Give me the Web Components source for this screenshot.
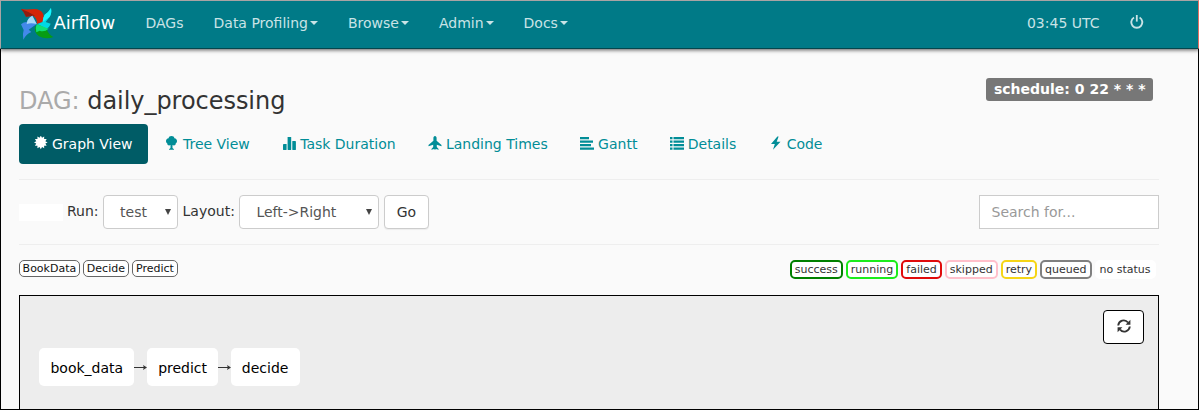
<!DOCTYPE html>
<html lang="en">
<head>
<meta charset="utf-8">
<title>Airflow - DAG daily_processing</title>
<style>
html,body{margin:0;height:100%;overflow:hidden}
body{font:14px/20px "DejaVu Sans",Verdana,sans-serif;color:#333;background:#fafafa}
</style>
</head>
<body>
<dag-page></dag-page>
<script>
const define = (name, markup) => customElements.define(name, class extends HTMLElement {
  constructor() {
    super();
    const html = typeof markup === 'function' ? markup(this) : markup;
    this.attachShadow({mode: 'open'}).innerHTML = html;
  }
});

const burstPoints = Array.from({length: 24}, (_, i) => {
  const r = i % 2 ? 4.7 : 6.8, a = i * Math.PI / 12;
  return `${(6.8 + r * Math.sin(a)).toFixed(2)},${(6.4 - r * Math.cos(a)).toFixed(2)}`;
}).join(' ');

const icons = {
  off: '<path d="M4 2.500A5.500 5.500 0 1 0 9.600 2.500" fill="none" stroke="currentColor" stroke-width="1.900"/><path d="M5.900 0h1.800v6.600H5.900z"/>',
  burst: `<polygon points="${burstPoints}"/>`,
  tree: '<path d="M6.500 0c1.700 0 2.700.9 2.900 2.200 1.600.2 2.600 1.400 2.600 2.900 0 1.100-.5 1.900-1.300 2.400.2 1.700-1.800 2.600-3.200 1.500V12L9 13.200v.5H4v-.5L5.500 12V9C4.100 10.100 2.100 9.200 2.300 7.500 1.500 7 1 6.200 1 5.100c0-1.500 1-2.700 2.600-2.900C3.800.9 4.800 0 6.500 0z"/>',
  stats: '<rect x="1" y="8" width="3.600" height="6" rx=".4"/><rect x="5.600" y="1" width="3.600" height="13" rx=".4"/><rect x="10.300" y="5" width="3.600" height="9" rx=".4"/>',
  plane: '<path d="M7 0c1 0 1.600 1 1.600 2.200v2.600l4.900 4.200v1.300L8.800 8.700v2.400L10.600 13v.8L7.800 13 7 14l-.8-1-2.800.8V13l1.800-1.900V8.700L.5 10.300V9l4.900-4.200V2.200C5.400 1 6 0 7 0z"/>',
  left: '<path d="M0 1h9v2.200H0zM0 4.500h13v2.200H0zM0 8h11v2.200H0zM0 11.500h14v2.200H0z"/>',
  list: '<path d="M0 1h2.500v2.200H0zM3.500 1H14v2.200H3.500zM0 4.500h2.500v2.200H0zM3.500 4.500H14v2.200H3.500zM0 8h2.500v2.200H0zM3.500 8H14v2.200H3.500zM0 11.500h2.500v2.200H0zM3.500 11.500H14v2.200H3.500z"/>',
  flash: '<path d="M8.400.5L2 7.900h3.800L4 13.800l7.500-8H7.700L9.600.5z"/>',
  refresh: '<g fill="none" stroke="currentColor" stroke-width="1.900"><path d="M1.200 6.500C1.700 1.600 7.800-.5 11 3.500M12.800 7.500C12.300 12.400 6.200 14.500 3 10.500"/></g><path d="M13.400.8v5H8.600zM.6 13.200v-5h4.800z"/>'
};
define('glyph-icon', el => `<style>:host{display:inline-block;width:14px;height:14px;vertical-align:-1px}svg{display:block}</style>
<svg width="14" height="14" viewBox="0 0 14 14" fill="currentColor">${icons[el.getAttribute('name')]}</svg>`);

define('pinwheel-logo', `<style>:host{display:block;width:34px;height:34px}svg{display:block}</style>
<svg width="34" height="34" viewBox="59 21 102 102">
<path d="M62 27Q74 29 92 28Q119 24 128 41Q133 55 127 66L110 72Q111 54 98 47L77 50Q72 36 62 27Z" fill="#d52408"/>
<path d="M62 27Q80 33 104 47L98 47L77 50Q72 36 62 27Z" fill="#8f1c10"/>
<path d="M152 24Q155 42 147 52L136 66L151 71Q148 82 138 86L111 72L127 66Q128 52 133 44Q144 38 152 24Z" fill="#00d8e4"/>
<path d="M152 24Q155 42 147 52L127 66Q128 52 133 44Q144 38 152 24Z" fill="#16f6ff"/>
<path d="M110 74L122 88L140 90Q146 105 159 111Q137 119 116 109Q101 99 104 82Z" fill="#079c14"/>
<path d="M109 72L145 86Q132 97 118 92L108 97Q104 84 109 72Z" fill="#10df76"/>
<path d="M96 47L109 72L85 89L93 96Q77 103 69 119Q66 101 70 90L62 73Q70 66 79 66Q83 54 96 47Z" fill="#4389ea"/>
<path d="M96 47L109 72Q92 67 79 72Q80 55 96 47Z" fill="#a9d9f8"/>
</svg>`);

define('nav-item', el => `<style>
:host{display:flex;align-items:center;padding:0 15px;color:#c9e3e6;white-space:nowrap}
i{border:4px solid transparent;border-top-color:currentColor;border-bottom:0;margin-left:2px}
</style><slot></slot>${el.hasAttribute('caret') ? '<i></i>' : ''}`);

define('nav-bar', `<style>
:host{display:flex;box-sizing:border-box;height:49px;background:#007a87;border:1px solid #a9a4a4;border-right-color:#e06f63;border-bottom-color:#05464d;padding:0 46.500px 4px 18.500px;box-shadow:0 1px 4px rgba(0,0,0,.65);position:relative}
pinwheel-logo{margin-top:6px}
.brand{font-size:18px;color:#fff;display:flex;align-items:center;width:77px}
.right{margin-left:auto;display:flex}
</style>
<pinwheel-logo></pinwheel-logo><span class="brand">Airflow</span>
<nav-item>DAGs</nav-item><nav-item caret>Data Profiling</nav-item><nav-item caret>Browse</nav-item><nav-item caret>Admin</nav-item><nav-item caret>Docs</nav-item>
<div class="right"><nav-item>03:45 UTC</nav-item><nav-item style="padding-bottom:2px;padding-right:8px"><glyph-icon name="off"></glyph-icon></nav-item></div>`);

define('view-tab', el => `<style>
:host{display:block;box-sizing:border-box;height:40px;padding:10px 15.400px 10px 15px;border-radius:4px;color:#018d97;white-space:nowrap}
:host([active]){background:#005c66;color:#fff}
glyph-icon{margin-right:-.5px}
</style><glyph-icon name="${el.getAttribute('icon')}"></glyph-icon> <slot></slot>`);

define('dag-header', `<style>
:host{display:block}
.top{display:flex;justify-content:space-between;align-items:flex-start;height:46px;padding-right:6px}
h3{font-size:24px;line-height:26px;font-weight:400;margin:10px 0 0;letter-spacing:-.04px}
h3 span{color:#aaa}
.schedule{background:#777;color:#fff;font-weight:700;line-height:23px;height:23px;border-radius:3px;padding:0 7.500px}
nav{display:flex;gap:2px}
view-tab:first-child{width:129px;box-sizing:border-box}
</style>
<div class="top"><h3><span>DAG:</span> daily_processing</h3><div class="schedule">schedule: 0 22 * * *</div></div>
<nav><view-tab icon="burst" active>Graph View</view-tab><view-tab icon="tree">Tree View</view-tab><view-tab icon="stats">Task Duration</view-tab><view-tab icon="plane">Landing Times</view-tab><view-tab icon="left">Gantt</view-tab><view-tab icon="list">Details</view-tab><view-tab icon="flash">Code</view-tab></nav>`);

define('select-box', `<style>
:host{display:flex;box-sizing:border-box;height:34px;border:1px solid #ccc;border-radius:4px;background:#fff;color:#555;padding:0 6px 0 16.500px;align-items:center;justify-content:space-between}
i{border:3px solid transparent;border-top:6px solid #444;border-bottom:0;margin-bottom:1px}
</style><slot></slot><i></i>`);

define('dag-controls', `<style>
:host{display:flex;align-items:center;height:34px;padding:15px 0;border:solid #eee;border-width:1px 0}
.date{width:44px;height:17px;background:#fff;margin-right:4px;margin-top:1px}
.label{margin-bottom:2px}
.run{width:75px;margin:0 5px 0 4px}
.layout{width:140px;margin:0 5px 0 4px}
.go{box-sizing:border-box;width:45px;height:34px;line-height:32px;text-align:center;border:1px solid #ccc;border-radius:4px;background:#fff;box-shadow:0 1px 1px rgba(0,0,0,.06)}
.search{box-sizing:border-box;width:180px;height:34px;line-height:32px;border:1px solid #ccc;background:#fff;padding-left:11.500px;color:#999;margin-left:auto}
</style>
<span class="date"></span><span class="label">Run:</span><select-box class="run">test</select-box>
<span class="label">Layout:</span><select-box class="layout">Left-&gt;Right</select-box>
<div class="go">Go</div><div class="search">Search for...</div>`);

define('legend-tag', el => `<style>
:host{display:block;box-sizing:border-box;font-size:11px;white-space:nowrap;border-radius:5px;background:#fff;padding:0 3px}
:host([operator]){height:17px;line-height:15px;border:1px solid #666;color:#111}
:host([state]){height:19px;line-height:15px;border:2px solid ${el.getAttribute('state')};color:#333}
</style><slot></slot>`);

define('dag-legend', `<style>
:host{display:flex;justify-content:space-between;padding-right:3.500px;height:35px}
div{display:flex;gap:3px}
</style>
<div><legend-tag operator style="padding:0 2.600px">BookData</legend-tag><legend-tag operator style="padding:0 3px">Decide</legend-tag><legend-tag operator style="padding:0 3px">Predict</legend-tag></div>
<div><legend-tag state="green">success</legend-tag><legend-tag state="#1cec1c">running</legend-tag><legend-tag state="#e00b0b">failed</legend-tag><legend-tag state="pink">skipped</legend-tag><legend-tag state="#f5d516">retry</legend-tag><legend-tag state="gray">queued</legend-tag><legend-tag state="white">no status</legend-tag></div>`);

define('task-node', `<style>:host{display:block;box-sizing:border-box;height:38px;line-height:40px;border-radius:5px;background:#fff;color:#000;text-align:center;white-space:nowrap}</style><slot></slot>`);
define('flow-arrow', `<style>:host{display:block;width:13px;height:6px;margin-bottom:1px}svg{display:block}</style>
<svg width="13" height="6"><path d="M0 3.500h10" stroke="#333"/><path d="M9 1L13 3.500 9 6l.8-2.500z" fill="#333"/></svg>`);

define('dag-graph', `<style>
:host{display:flex;box-sizing:border-box;height:114px;border:1px solid #000;border-bottom:0;background:#ededed;padding:14px 14px 0 19px;justify-content:space-between;align-items:flex-start}
.flow{display:flex;align-items:center;margin-top:38px}
.refresh{box-sizing:border-box;width:41px;height:34px;border:1px solid #000;border-radius:4px;background:#fff;display:flex;align-items:center;justify-content:center;padding-bottom:2px}
</style>
<div class="flow"><task-node style="width:94.600px;padding-left:1px">book_data</task-node><flow-arrow></flow-arrow><task-node style="width:71px;padding-left:1px">predict</task-node><flow-arrow></flow-arrow><task-node style="width:69px">decide</task-node></div>
<div class="refresh"><glyph-icon name="refresh"></glyph-icon></div>`);

define('dag-page', `<style>
:host{display:block;height:410px;overflow:hidden}
main{box-sizing:border-box;height:361px;border:solid #000;border-width:0 1px 1px;padding:29px 39px 0 18px}
dag-controls{margin-top:15px;margin-bottom:15px}
</style>
<nav-bar></nav-bar>
<main><dag-header></dag-header><dag-controls></dag-controls><dag-legend></dag-legend><dag-graph></dag-graph></main>`);
</script>
</body>
</html>
